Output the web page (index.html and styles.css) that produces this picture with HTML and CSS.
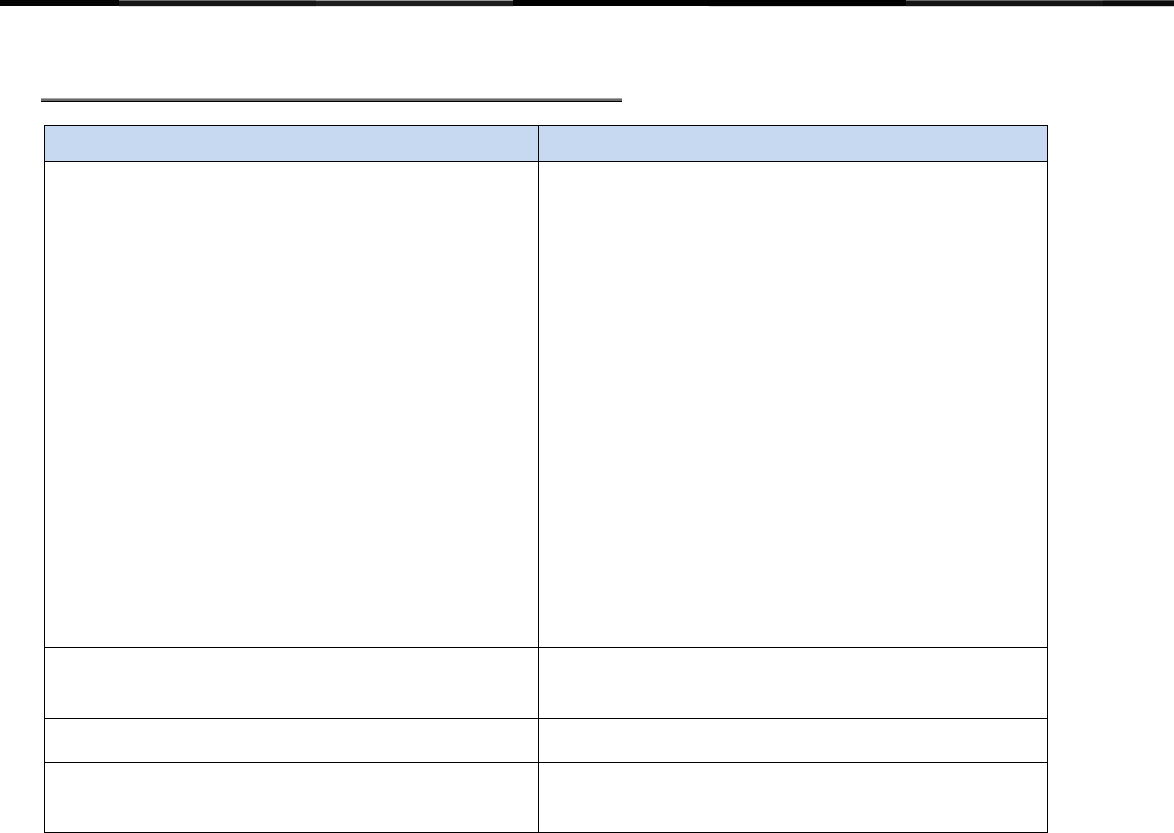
FILE: index.html
```html
<!DOCTYPE html>
<html>
<head>
	<meta charset="utf-8">
	<title>Document page</title>
	<link rel="stylesheet" href="styles.css">
</head>
<body>
	<!-- heavy rule along the top of the page -->
	<div class="topbar">
		<div class="seg s1"></div>
		<div class="seg s2"></div>
		<div class="seg s3"></div>
		<div class="seg s4"></div>
		<div class="seg s5"></div>
		<div class="seg s6"></div>
		<div class="seg s7"></div>
	</div>
	<div class="page">
		<!-- empty title with its underline -->
		<div class="title"></div>
		<table class="grid">
			<tr class="head">
				<th class="c1"></th>
				<th class="c2"></th>
			</tr>
			<tr class="r1">
				<td></td>
				<td></td>
			</tr>
			<tr class="r2">
				<td></td>
				<td></td>
			</tr>
			<tr class="r3">
				<td></td>
				<td></td>
			</tr>
			<tr class="r4">
				<td></td>
				<td></td>
			</tr>
		</table>
	</div>
</body>
</html>
```

FILE: styles.css
```css
	body {
		margin: 0;
		background-color: white;
		font-family: "Liberation Sans", Arial, sans-serif;
	}
	/* top rule, made of slightly different dark strips */
	.topbar {
		display: flex;
		height: 7px;
	}
	.seg {
		height: 6px;
	}
	.s1 {
		width: 119px;
		background-color: #050505;
	}
	.s2 {
		width: 197px;
		background: linear-gradient(#6e6e6e 0 1px, #161616 1px 6px);
		border-bottom: 1px solid #d8d8d8;
	}
	.s3 {
		width: 197px;
		background: linear-gradient(#9a9a9a 0 1px, #1e1e1e 1px 6px);
		border-bottom: 1px solid #e2e2e2;
	}
	.s4 {
		width: 196px;
		background-color: #000;
	}
	.s5 {
		width: 197px;
		background-color: #000;
		border-bottom: 1px solid #dcdcdc;
	}
	.s6 {
		width: 197px;
		background: linear-gradient(#6a6a6a 0 1px, #141414 1px 6px);
		border-bottom: 1px solid #cfcfcf;
	}
	.s7 {
		flex: 1;
		background: linear-gradient(#555 0 1px, #0c0c0c 1px 6px);
		border-bottom: 1px solid #cfcfcf;
	}
	.page {
		padding-left: 41px;
	}
	/* title underline: light grey fading to black */
	.title {
		width: 581px;
		height: 4px;
		margin-top: 91px;
		background: linear-gradient(#a8a8a8 0 1px, #6a6a6a 1px 3px, #000 3px 4px);
	}
	.grid {
		margin-top: 23px;
		margin-left: 3px;
		width: 1004px;
		border-collapse: collapse;
		table-layout: fixed;
	}
	.grid th,
	.grid td {
		border: 1px solid black;
		padding: 0;
	}
	.head th {
		background-color: #c6d9f1;
		height: 35px;
	}
	.c1 {
		width: 493px;
	}
	.r1 td {
		height: 485px;
	}
	.r2 td {
		height: 70px;
	}
	.r3 td {
		height: 43px;
	}
	.r4 td {
		height: 69px;
	}
```
